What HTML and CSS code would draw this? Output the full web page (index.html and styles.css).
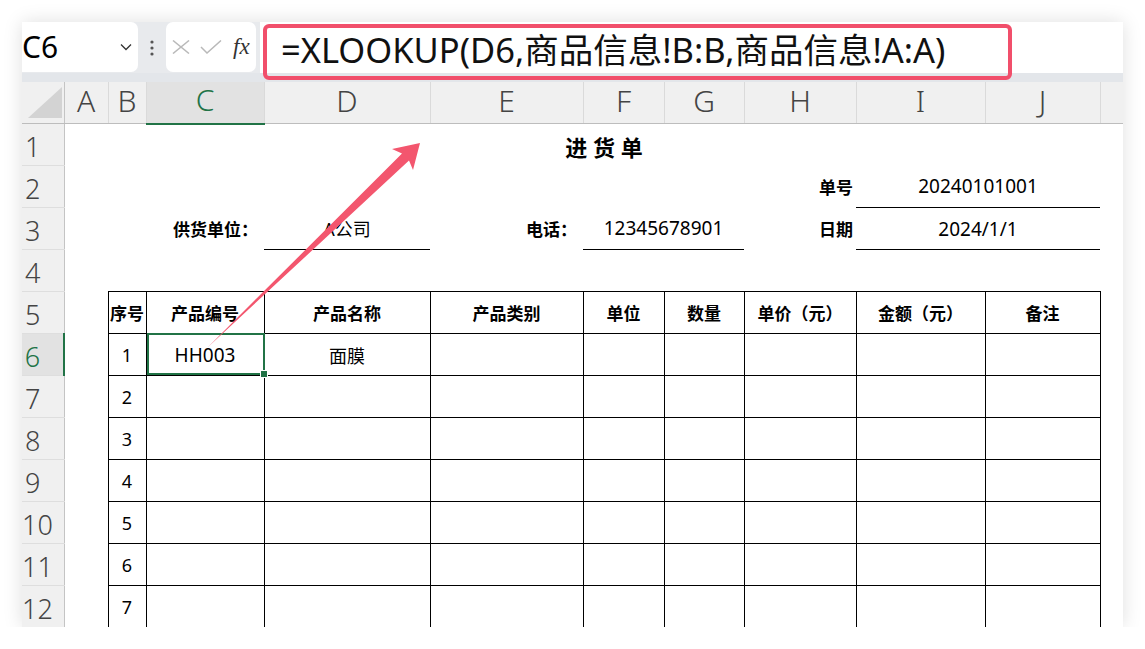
FILE: index.html
```html
<!DOCTYPE html>
<html lang="zh-CN">
<head>
  <meta charset="UTF-8" />
  <title>进货单 - XLOOKUP</title>
  <link rel="stylesheet" href="styles.css">
</head>
<body>
  <div class="window">
    <div class="formula-bar">
      <div class="name-box">
        <span>C6</span>
        <svg class="chev" width="12" height="8" viewBox="0 0 12 8"><polyline points="1,1.5 6,6.5 11,1.5" /></svg>
      </div>
      <div class="grip">
        <svg width="6" height="16" viewBox="0 0 6 16"><circle cx="3" cy="2" r="1.6" /><circle cx="3" cy="8" r="1.6" /><circle cx="3" cy="14" r="1.6" /></svg>
      </div>
      <div class="fx-box">
        <svg class="ic" width="18" height="14" viewBox="0 0 18 14"><line x1="1" y1="0.5" x2="17" y2="13.5" /><line x1="17" y1="0.5" x2="1" y2="13.5" /></svg>
        <svg class="ic" width="22" height="14" viewBox="0 0 22 14"><polyline points="1,7 7,13 21,0.5" /></svg>
        <span class="fx">fx</span>
      </div>
      <div class="formula-input">
        <span>=XLOOKUP(D6,商品信息!B:B,商品信息!A:A)</span>
      </div>
    </div>
    <div class="band"></div>

    <table class="sheet">
      <colgroup>
        <col class="w-rh"><col class="w-a"><col class="w-b"><col class="w-c"><col class="w-d"><col class="w-e">
        <col class="w-f"><col class="w-g"><col class="w-h"><col class="w-i"><col class="w-j"><col class="w-k">
      </colgroup>
      <tr class="hdr-row">
        <th class="corner"><svg width="34" height="31" viewBox="0 0 34 31"><polygon points="0,31 34,0 34,31" /></svg></th>
        <th class="ch">A</th><th class="ch">B</th><th class="ch sel">C</th><th class="ch">D</th><th class="ch">E</th>
        <th class="ch">F</th><th class="ch">G</th><th class="ch">H</th><th class="ch">I</th><th class="ch">J</th><th class="ch"></th>
      </tr>
      <tr>
        <th class="rh">1</th><td></td>
        <td class="title" colspan="9">进 货 单</td>
        <td></td>
      </tr>
      <tr>
        <th class="rh">2</th><td></td><td></td><td></td><td></td><td></td><td></td><td></td>
        <td class="lbl">单号</td>
        <td class="ul val" colspan="2">20240101001</td>
        <td></td>
      </tr>
      <tr>
        <th class="rh">3</th><td></td><td></td>
        <td class="lbl lbl-c">供货单位：</td>
        <td class="ul">A公司</td>
        <td class="lbl lbl-e">电话：</td>
        <td class="ul val" colspan="2">12345678901</td>
        <td class="lbl">日期</td>
        <td class="ul val" colspan="2">2024/1/1</td>
        <td></td>
      </tr>
      <tr>
        <th class="rh">4</th><td></td><td></td><td></td><td></td><td></td><td></td><td></td><td></td><td></td><td></td><td></td>
      </tr>
      <tr>
        <th class="rh">5</th><td></td>
        <td class="b hd">序号</td><td class="b hd">产品编号</td><td class="b hd">产品名称</td><td class="b hd">产品类别</td>
        <td class="b hd">单位</td><td class="b hd">数量</td><td class="b hd">单价（元）</td><td class="b hd">金额（元）</td><td class="b hd">备注</td>
        <td></td>
      </tr>
      <tr>
        <th class="rh sel">6</th><td></td>
        <td class="b">1</td><td class="b val">HH003</td><td class="b">面膜</td><td class="b"></td>
        <td class="b"></td><td class="b"></td><td class="b"></td><td class="b"></td><td class="b"></td>
        <td></td>
      </tr>
      <tr>
        <th class="rh">7</th><td></td>
        <td class="b">2</td><td class="b"></td><td class="b"></td><td class="b"></td>
        <td class="b"></td><td class="b"></td><td class="b"></td><td class="b"></td><td class="b"></td>
        <td></td>
      </tr>
      <tr>
        <th class="rh">8</th><td></td>
        <td class="b">3</td><td class="b"></td><td class="b"></td><td class="b"></td>
        <td class="b"></td><td class="b"></td><td class="b"></td><td class="b"></td><td class="b"></td>
        <td></td>
      </tr>
      <tr>
        <th class="rh">9</th><td></td>
        <td class="b">4</td><td class="b"></td><td class="b"></td><td class="b"></td>
        <td class="b"></td><td class="b"></td><td class="b"></td><td class="b"></td><td class="b"></td>
        <td></td>
      </tr>
      <tr>
        <th class="rh">10</th><td></td>
        <td class="b">5</td><td class="b"></td><td class="b"></td><td class="b"></td>
        <td class="b"></td><td class="b"></td><td class="b"></td><td class="b"></td><td class="b"></td>
        <td></td>
      </tr>
      <tr>
        <th class="rh">11</th><td></td>
        <td class="b">6</td><td class="b"></td><td class="b"></td><td class="b"></td>
        <td class="b"></td><td class="b"></td><td class="b"></td><td class="b"></td><td class="b"></td>
        <td></td>
      </tr>
      <tr>
        <th class="rh">12</th><td></td>
        <td class="b">7</td><td class="b"></td><td class="b"></td><td class="b"></td>
        <td class="b"></td><td class="b"></td><td class="b"></td><td class="b"></td><td class="b"></td>
        <td></td>
      </tr>
    </table>

    <!-- 选中单元格 C6 -->
    <div class="selection"><span class="handle"></span></div>

    <!-- 公式栏红框 -->
    <div class="highlight"></div>

    <!-- 指向公式的箭头 -->
    <svg class="arrow" width="1101" height="605" viewBox="0 0 1101 605">
      <polygon points="185.5,325.5 387,138.5 391,148 398,121 370,127 380,131.5" />
    </svg>
  </div>
</body>
</html>
```

FILE: styles.css
```css
body {
  margin: 0;
  background: #fff;
  font-family: "Noto Sans", "Noto Sans CJK SC", sans-serif;
  color: #000;
}

.window {
  position: relative;
  width: 1101px;
  height: 605px;
  margin: 22px 0 0 22px;
  overflow: hidden;
  background: #fff;
  box-shadow: 0 0 18px rgba(0, 0, 0, 0.13);
}

/* 公式栏 */
.formula-bar {
  display: flex;
  height: 51px;
  background: #e8eaed;
}

.name-box {
  width: 116px;
  height: 50px;
  background: #fff;
  border-radius: 0 7px 7px 0;
  display: flex;
  align-items: center;
  justify-content: space-between;
  padding-right: 6px;
  box-sizing: border-box;
  font-size: 30px;
  line-height: 1;
}

.chev polyline {
  fill: none;
  stroke: #333;
  stroke-width: 1.3;
}

.grip {
  width: 28px;
  display: flex;
  align-items: center;
  justify-content: center;
}

.grip circle {
  fill: #555;
}

.fx-box {
  width: 90px;
  height: 50px;
  background: #fff;
  border-radius: 7px;
  display: flex;
  align-items: center;
  gap: 10px;
  padding-left: 6px;
  box-sizing: border-box;
}

.ic line,
.ic polyline {
  fill: none;
  stroke: #b9b9b9;
  stroke-width: 1.5;
}

.fx {
  font-family: "Liberation Serif", serif;
  font-style: italic;
  font-size: 23px;
  color: #333;
  margin-left: 1px;
}

.formula-input {
  flex: 1;
  margin-left: 4px;
  background: #fff;
  display: flex;
  align-items: center;
  padding-left: 21px;
  padding-top: 1px;
  font-size: 34.5px;
  color: #111;
  white-space: nowrap;
}

.band {
  height: 9px;
  background: #e3e6ea;
}

/* 工作表 */
.sheet {
  border-collapse: collapse;
  table-layout: fixed;
  width: 1101px;
}

.w-rh { width: 42px; }
.w-a { width: 44px; }
.w-b { width: 38px; }
.w-c { width: 118px; }
.w-d { width: 166px; }
.w-e { width: 153px; }
.w-f { width: 81px; }
.w-g { width: 80px; }
.w-h { width: 112px; }
.w-i { width: 129px; }
.w-j { width: 115px; }
.w-k { width: 23px; }

.sheet tr {
  height: 42px;
}

.sheet tr.hdr-row {
  height: 41px;
}

.corner {
  background: #f0f0f0;
  padding: 5px 2px 5px 6px;
  border-right: 1px solid #c4c4c4;
  border-bottom: 1px solid #bdbdbd;
}

.corner svg {
  display: block;
}

.corner polygon {
  fill: #d3d3d3;
}

.ch {
  background: #f0f0f0;
  font-weight: 300;
  font-size: 30px;
  line-height: 1;
  color: #444;
  padding: 0 0 4px;
  border-right: 1px solid #dadada;
  border-bottom: 1px solid #bdbdbd;
}

.ch.sel {
  background: #e2e2e2;
  color: #217346;
  border-bottom: 2px solid #217346;
}

.rh {
  background: #f0f0f0;
  font-weight: 300;
  font-size: 27px;
  line-height: 1;
  color: #444;
  text-align: center;
  padding: 4px 20px 0 0;
  border-right: 1px solid #c4c4c4;
  border-bottom: 1px solid #dedede;
}

.rh.sel {
  background: #e2e2e2;
  color: #217346;
  border-right: 2px solid #217346;
}

.sheet td {
  padding: 0;
  text-align: center;
  font-size: 18px;
  white-space: nowrap;
  overflow: hidden;
}

.sheet td.val {
  font-size: 19px;
}

.sheet td.b {
  border: 1px solid #000;
}

.sheet td.hd {
  font-weight: bold;
  font-size: 17px;
}

.sheet td.title {
  font-size: 22px;
  font-weight: bold;
  padding-top: 2px;
}

.sheet td.lbl {
  font-weight: bold;
  font-size: 17px;
  text-align: right;
  padding-right: 3px;
}

.sheet td.lbl-c {
  padding-right: 6px;
}

.sheet td.lbl-e {
  padding-right: 6px;
}

.sheet td.ul {
  border-bottom: 1px solid #000;
}

/* 覆盖层 */
.selection {
  position: absolute;
  left: 125px;
  top: 311px;
  width: 118px;
  height: 42px;
  border: 2px solid #217346;
  box-sizing: border-box;
}

.handle {
  position: absolute;
  right: -5px;
  bottom: -5px;
  width: 6px;
  height: 6px;
  background: #217346;
  border: 1px solid #fff;
}

.highlight {
  position: absolute;
  left: 241px;
  top: 2px;
  width: 749px;
  height: 56px;
  border: 4px solid #f14f6b;
  border-radius: 6px;
  box-sizing: border-box;
}

.arrow {
  position: absolute;
  left: 0;
  top: 0;
  pointer-events: none;
}

.arrow polygon {
  fill: #f3566e;
}
```
